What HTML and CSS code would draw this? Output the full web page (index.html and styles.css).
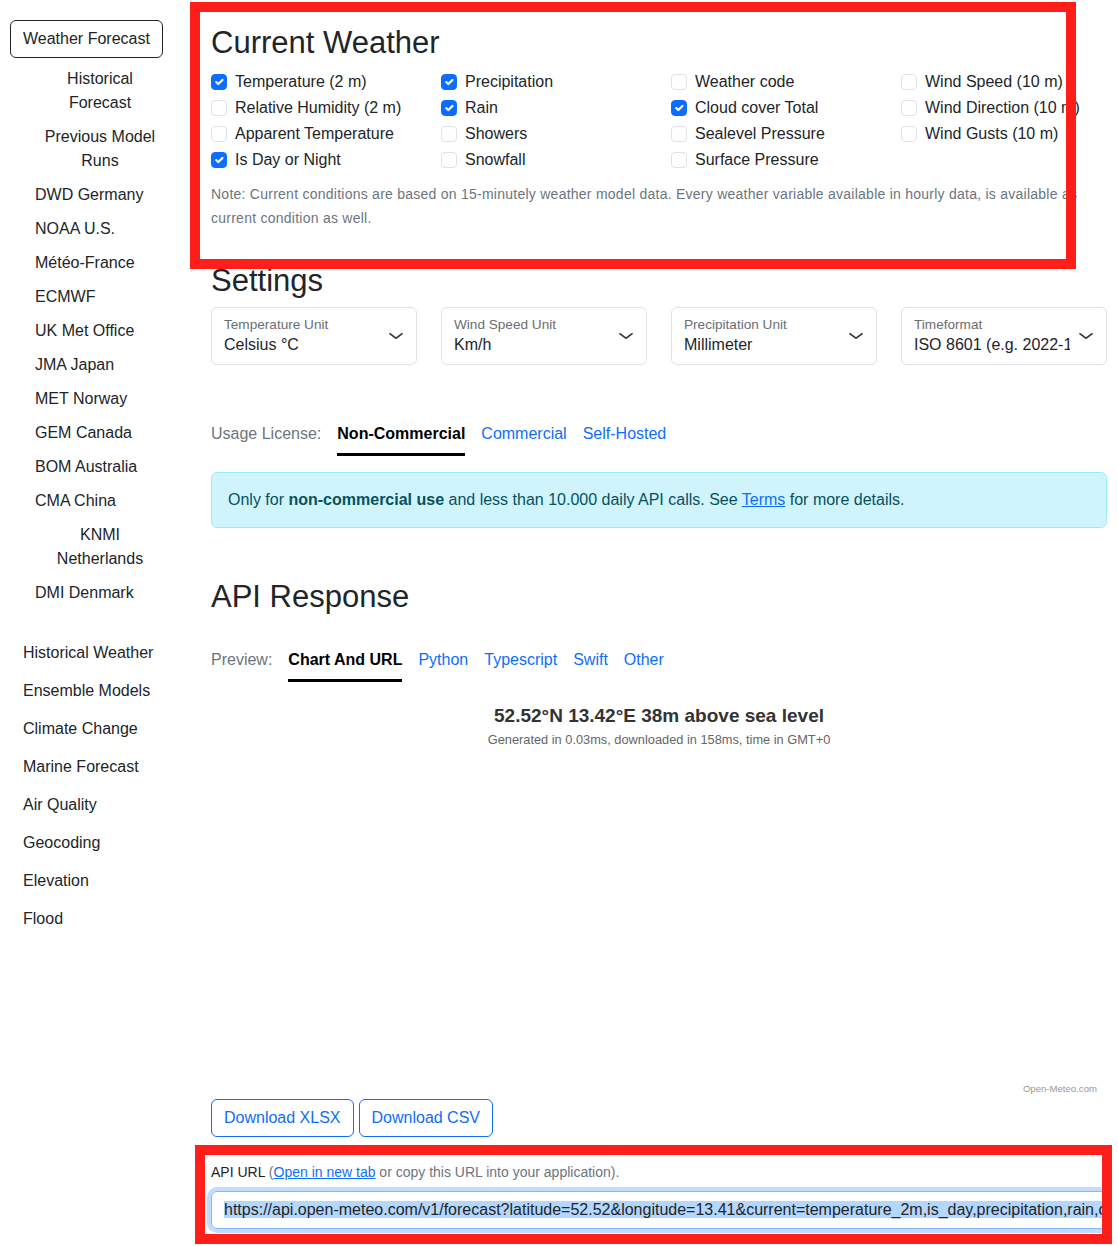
FILE: index.html
```html
<!DOCTYPE html>
<html lang="en">
<head>
<meta charset="utf-8">
<title>Weather Forecast API</title>
<link rel="stylesheet" href="styles.css">
</head>
<body>
<div class="page">
  <aside class="sidebar">
    <nav>
      <a class="nav-btn" href="#">Weather Forecast</a>
      <ul class="subnav">
        <li><a href="#">Historical Forecast</a></li>
        <li><a href="#">Previous Model Runs</a></li>
        <li><a href="#">DWD Germany</a></li>
        <li><a href="#">NOAA U.S.</a></li>
        <li><a href="#">Météo-France</a></li>
        <li><a href="#">ECMWF</a></li>
        <li><a href="#">UK Met Office</a></li>
        <li><a href="#">JMA Japan</a></li>
        <li><a href="#">MET Norway</a></li>
        <li><a href="#">GEM Canada</a></li>
        <li><a href="#">BOM Australia</a></li>
        <li><a href="#">CMA China</a></li>
        <li><a href="#">KNMI Netherlands</a></li>
        <li><a href="#">DMI Denmark</a></li>
      </ul>
      <ul class="topnav">
        <li><a href="#">Historical Weather</a></li>
        <li><a href="#">Ensemble Models</a></li>
        <li><a href="#">Climate Change</a></li>
        <li><a href="#">Marine Forecast</a></li>
        <li><a href="#">Air Quality</a></li>
        <li><a href="#">Geocoding</a></li>
        <li><a href="#">Elevation</a></li>
        <li><a href="#">Flood</a></li>
      </ul>
    </nav>
  </aside>

  <main class="main">
    <section class="current">
      <h2 class="title first">Current Weather</h2>
      <div class="grid4">
        <div class="check-col">
          <label class="check"><span class="box on"><svg viewBox="0 0 20 20" width="16" height="16"><path d="m6 10 3 3 6-6" fill="none" stroke="#fff" stroke-width="3" stroke-linecap="round" stroke-linejoin="round"/></svg></span>Temperature (2 m)</label>
          <label class="check"><span class="box"></span>Relative Humidity (2 m)</label>
          <label class="check"><span class="box"></span>Apparent Temperature</label>
          <label class="check"><span class="box on"><svg viewBox="0 0 20 20" width="16" height="16"><path d="m6 10 3 3 6-6" fill="none" stroke="#fff" stroke-width="3" stroke-linecap="round" stroke-linejoin="round"/></svg></span>Is Day or Night</label>
        </div>
        <div class="check-col">
          <label class="check"><span class="box on"><svg viewBox="0 0 20 20" width="16" height="16"><path d="m6 10 3 3 6-6" fill="none" stroke="#fff" stroke-width="3" stroke-linecap="round" stroke-linejoin="round"/></svg></span>Precipitation</label>
          <label class="check"><span class="box on"><svg viewBox="0 0 20 20" width="16" height="16"><path d="m6 10 3 3 6-6" fill="none" stroke="#fff" stroke-width="3" stroke-linecap="round" stroke-linejoin="round"/></svg></span>Rain</label>
          <label class="check"><span class="box"></span>Showers</label>
          <label class="check"><span class="box"></span>Snowfall</label>
        </div>
        <div class="check-col">
          <label class="check"><span class="box"></span>Weather code</label>
          <label class="check"><span class="box on"><svg viewBox="0 0 20 20" width="16" height="16"><path d="m6 10 3 3 6-6" fill="none" stroke="#fff" stroke-width="3" stroke-linecap="round" stroke-linejoin="round"/></svg></span>Cloud cover Total</label>
          <label class="check"><span class="box"></span>Sealevel Pressure</label>
          <label class="check"><span class="box"></span>Surface Pressure</label>
        </div>
        <div class="check-col">
          <label class="check"><span class="box"></span>Wind Speed (10 m)</label>
          <label class="check"><span class="box"></span>Wind Direction (10 m)</label>
          <label class="check"><span class="box"></span>Wind Gusts (10 m)</label>
        </div>
      </div>
      <p class="note">Note: Current conditions are based on 15-minutely weather model data. Every weather variable available in hourly data, is available as current condition as well.</p>
    </section>

    <h2 class="title">Settings</h2>
    <div class="grid4">
      <div class="select">
        <div class="sel-text"><div class="sel-label">Temperature Unit</div><div class="sel-value">Celsius °C</div></div>
        <svg class="chev" viewBox="0 0 16 16" width="16" height="12" preserveAspectRatio="none"><path d="m2 5 6 6 6-6" fill="none" stroke="#343a40" stroke-width="2" stroke-linecap="round" stroke-linejoin="round"/></svg>
      </div>
      <div class="select">
        <div class="sel-text"><div class="sel-label">Wind Speed Unit</div><div class="sel-value">Km/h</div></div>
        <svg class="chev" viewBox="0 0 16 16" width="16" height="12" preserveAspectRatio="none"><path d="m2 5 6 6 6-6" fill="none" stroke="#343a40" stroke-width="2" stroke-linecap="round" stroke-linejoin="round"/></svg>
      </div>
      <div class="select">
        <div class="sel-text"><div class="sel-label">Precipitation Unit</div><div class="sel-value">Millimeter</div></div>
        <svg class="chev" viewBox="0 0 16 16" width="16" height="12" preserveAspectRatio="none"><path d="m2 5 6 6 6-6" fill="none" stroke="#343a40" stroke-width="2" stroke-linecap="round" stroke-linejoin="round"/></svg>
      </div>
      <div class="select">
        <div class="sel-text"><div class="sel-label">Timeformat</div><div class="sel-value">ISO 8601 (e.g. 2022-11-22)</div></div>
        <svg class="chev" viewBox="0 0 16 16" width="16" height="12" preserveAspectRatio="none"><path d="m2 5 6 6 6-6" fill="none" stroke="#343a40" stroke-width="2" stroke-linecap="round" stroke-linejoin="round"/></svg>
      </div>
    </div>

    <div class="tabs license">
      <span class="tab-label">Usage License:</span>
      <a class="tab active" href="#">Non-Commercial</a>
      <a class="tab" href="#">Commercial</a>
      <a class="tab" href="#">Self-Hosted</a>
    </div>
    <div class="alert">Only for <strong>non-commercial use</strong> and less than 10.000 daily API calls. See <a href="#">Terms</a> for more details.</div>

    <h2 class="title api-title">API Response</h2>
    <div class="tabs preview">
      <span class="tab-label">Preview:</span>
      <a class="tab active" href="#">Chart And URL</a>
      <a class="tab" href="#">Python</a>
      <a class="tab" href="#">Typescript</a>
      <a class="tab" href="#">Swift</a>
      <a class="tab" href="#">Other</a>
    </div>

    <div class="chart">
      <div class="chart-title">52.52°N 13.42°E 38m above sea level</div>
      <div class="chart-sub">Generated in 0.03ms, downloaded in 158ms, time in GMT+0</div>
      <div class="credits">Open-Meteo.com</div>
    </div>

    <div class="downloads">
      <a class="btn-outline" href="#">Download XLSX</a>
      <a class="btn-outline" href="#">Download CSV</a>
    </div>

    <div class="api-url">
      <div class="url-label">API URL <span class="muted">(<a href="#">Open in new tab</a> or copy this URL into your application).</span></div>
      <div class="url-input"><span class="sel">https://api.open-meteo.com/v1/forecast?latitude=52.52&amp;longitude=13.41&amp;current=temperature_2m,is_day,precipitation,rain,cloud_cover&amp;hourly=temperature_2m</span></div>
    </div>
  </main>
</div>
<div class="mark mark-top"></div>
<div class="mark mark-bottom"></div>
</body>
</html>
```
FILE: styles.css
```css
* { box-sizing: border-box; }

html {
  margin: 0;
  padding: 0;
  background: #fff;
  overflow: hidden;
}

body {
  position: relative;
  margin: 0;
  padding: 0;
  min-height: 1246px;
  background: #fff;
  font-family: "Liberation Sans", Arial, sans-serif;
  font-size: 16px;
  line-height: 24px;
  color: #212529;
}

a { color: #0d6efd; text-decoration: none; }

.page {
  display: grid;
  grid-template-columns: 199px minmax(0, 1fr);
}

/* Sidebar */
.sidebar {
  padding: 20px 0 0 10px;
}
.sidebar a { color: #212529; }

.nav-btn {
  display: block;
  width: max-content;
  padding: 6px 12px;
  border: 1px solid #212529;
  border-radius: 6px;
  line-height: 24px;
}

.subnav {
  list-style: none;
  margin: 4px 0 24px 25px;
  padding: 0;
  width: 130px;
}
.subnav li { text-align: left; padding: 5px 0; }
.subnav a { display: inline-block; text-align: center; }

.topnav {
  list-style: none;
  margin: 0;
  padding: 0;
}
.topnav a {
  display: block;
  padding: 7px 13px;
}

/* Main */
.main {
  min-width: 0;
  padding: 24px 11px 0 12px;
}

.title {
  margin: 0 0 8px;
  font-size: 31px;
  line-height: 1.2;
  font-weight: 500;
  color: #212529;
}
.title.first { margin-bottom: 9px; }

.grid4 {
  display: grid;
  grid-template-columns: repeat(4, minmax(0, 1fr));
  column-gap: 24px;
}

.check {
  display: flex;
  align-items: center;
  gap: 8px;
  height: 24px;
  margin-bottom: 2px;
  white-space: nowrap;
}
.box {
  flex: none;
  width: 16px;
  height: 16px;
  border: 1px solid #dee2e6;
  border-radius: 4px;
  background: #fff;
  display: flex;
  align-items: center;
  justify-content: center;
}
.box.on {
  background: #0d6efd;
  border-color: #0d6efd;
}
.box svg { display: block; }

.note {
  margin: 8px 0 32px;
  font-size: 14px;
  line-height: 24px;
  letter-spacing: 0.25px;
  color: #6c757d;
}

/* Selects */
.select {
  height: 58px;
  border: 1px solid #dee2e6;
  border-radius: 6px;
  display: flex;
  align-items: center;
  gap: 8px;
  padding: 0 12px;
}
.sel-text {
  flex: 1;
  min-width: 0;
  overflow: hidden;
  white-space: nowrap;
  padding-top: 2px;
}
.sel-label {
  font-size: 13.6px;
  line-height: 16px;
  color: #6b6e71;
}
.sel-value {
  font-size: 16px;
  line-height: 24px;
}
.chev { flex: none; display: block; }

/* Tabs */
.tabs {
  display: flex;
  align-items: flex-start;
  gap: 16px;
}
.license { margin-top: 57px; }
.tab-label, .tab {
  padding-bottom: 7px;
  border-bottom: 3px solid transparent;
}
.tab-label { color: #6c757d; }
.tab { color: #0d6efd; }
.tab.active {
  color: #000;
  font-weight: 700;
  border-bottom-color: #000;
}

.alert {
  margin-top: 16px;
  padding: 15px 16px;
  background: #cff4fc;
  border: 1px solid #9eeaf9;
  border-radius: 6px;
  color: #055160;
}
.alert strong { font-weight: 700; }
.alert a { color: #0d6efd; text-decoration: underline; }

.api-title { margin-top: 50px; }
.preview { margin-top: 32px; }

/* Chart */
.chart {
  margin-top: 9px;
  height: 408px;
  display: flex;
  flex-direction: column;
  align-items: center;
  padding: 13px 10px 4px;
}
.chart-title {
  font-size: 19px;
  line-height: 24px;
  font-weight: 700;
  color: #333;
}
.chart-sub {
  margin-top: 4px;
  font-size: 12.8px;
  line-height: 16px;
  color: #666;
}
.credits {
  margin-top: auto;
  align-self: flex-end;
  font-size: 9.6px;
  line-height: 12px;
  color: #999;
}

/* Downloads */
.downloads {
  display: flex;
  gap: 5px;
}
.btn-outline {
  display: block;
  padding: 6px 12px;
  border: 1px solid #0d6efd;
  border-radius: 6px;
  color: #0d6efd;
  line-height: 24px;
}

/* API URL */
.api-url { margin-top: 25px; }
.url-label {
  font-size: 14px;
  line-height: 21px;
}
.muted { color: #6c757d; }
.url-label a { text-decoration: underline; }
.url-input {
  margin-top: 8px;
  padding: 6px 12px;
  border: 1px solid #86b7fe;
  border-radius: 6px;
  box-shadow: 0 0 0 4px #c2dbfe;
  white-space: nowrap;
  overflow: hidden;
  line-height: 24px;
}
.sel { background: #b3d7fe; }

/* Annotation overlays */
.mark {
  position: absolute;
  border: 10px solid #fe1e1a;
  pointer-events: none;
}
.mark-top {
  left: 190px;
  top: 2px;
  width: 886px;
  height: 267px;
}
.mark-bottom {
  left: 195px;
  top: 1145px;
  width: 917px;
  height: 99px;
}
```
